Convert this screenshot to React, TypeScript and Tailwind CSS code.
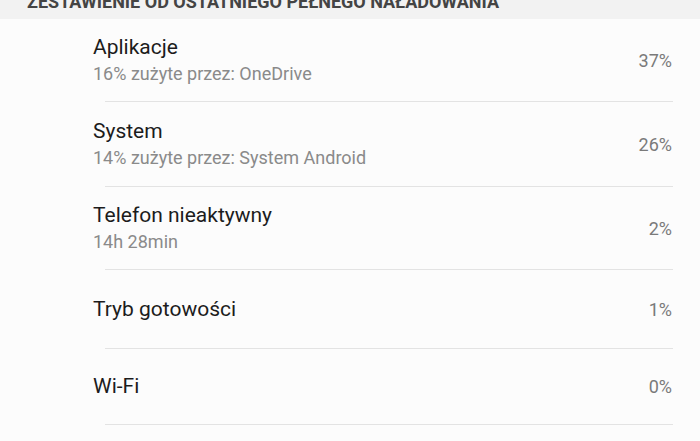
const rows = [
  { title: "Aplikacje", sub: "16% zużyte przez: OneDrive", value: "37%", h: "h-[82px]" },
  { title: "System", sub: "14% zużyte przez: System Android", value: "26%", h: "h-[84px]" },
  { title: "Telefon nieaktywny", sub: "14h 28min", value: "2%", h: "h-[82px]" },
  { title: "Tryb gotowości", sub: "", value: "1%", h: "h-[78px]" },
  { title: "Wi-Fi", sub: "", value: "0%", h: "h-[75px]" },
];

export default function App() {
  return (
    <div className="w-[700px] h-[441px] overflow-hidden bg-[#fcfcfc] font-['Roboto',sans-serif]">
      <div className="h-[19px] overflow-hidden bg-[#f2f2f2] pl-[27px]">
        <div className="-mt-[8px] text-[18px] leading-[20px] font-bold text-[#444] whitespace-nowrap">
          ZESTAWIENIE OD OSTATNIEGO PEŁNEGO NAŁADOWANIA
        </div>
      </div>
      {rows.map((r) => (
        <div key={r.title}>
          <div className={`${r.h} flex items-center pl-[93px] pr-[28px]`}>
            <div className="flex-1">
              <div className="text-[21px] leading-[27px] text-[#1c1c1c]">{r.title}</div>
              {r.sub && (
                <div className="text-[18px] leading-[26px] text-[#8a8a8a]">{r.sub}</div>
              )}
            </div>
            <div className="text-[18px] text-[#7a7a7a]">{r.value}</div>
          </div>
          <div className="ml-[105px] mr-[27px] h-px bg-[#e3e3e3]" />
        </div>
      ))}
    </div>
  );
}
